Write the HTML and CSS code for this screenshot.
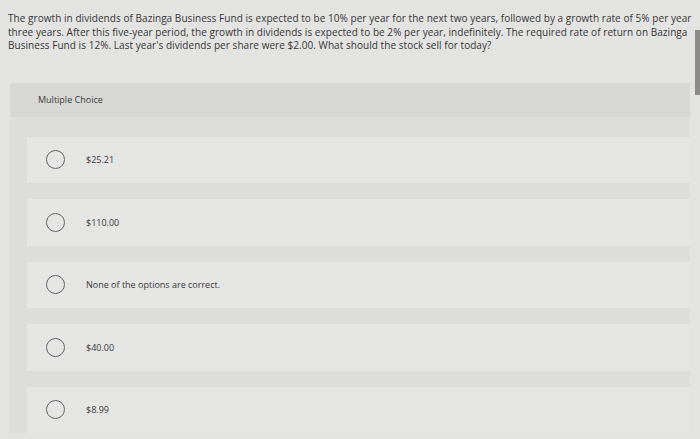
FILE: index.html
```html
<!DOCTYPE html>
<html lang="en">
<head>
  <meta charset="UTF-8">
  <title>Multiple Choice</title>
  <link rel="stylesheet" href="styles.css">
</head>
<body>
  <p class="question">The growth in dividends of Bazinga Business Fund is expected to be 10% per year for the next two years, followed by a growth rate of 5% per year three years. After this five-year period, the growth in dividends is expected to be 2% per year, indefinitely. The required rate of return on Bazinga Business Fund is 12%. Last year's dividends per share were $2.00. What should the stock sell for today?</p>

  <div class="scroll-thumb"></div>

  <div class="panel">
    <div class="panel-header">Multiple Choice</div>
    <div class="options">
      <label class="option"><span class="radio"></span><span class="option-text">$25.21</span></label>
      <label class="option"><span class="radio"></span><span class="option-text">$110.00</span></label>
      <label class="option"><span class="radio"></span><span class="option-text">None of the options are correct.</span></label>
      <label class="option"><span class="radio"></span><span class="option-text">$40.00</span></label>
      <label class="option"><span class="radio"></span><span class="option-text">$8.99</span></label>
    </div>
  </div>
</body>
</html>
```

FILE: styles.css
```css
body {
  margin: 0;
  font-family: "Open Sans", Lato, sans-serif;
  background-color: #e3e3e1;
  color: #333;
  height: 439px;
  overflow: hidden;
  position: relative;
}

.question {
  margin: 0;
  padding: 12px 0 0 8px;
  font-size: 10px;
  letter-spacing: 0.05px;
  line-height: 13.5px;
  width: 692px;
  color: #363636;
}

.scroll-thumb {
  position: absolute;
  right: 0;
  top: 30px;
  width: 5px;
  height: 65px;
  background-color: #8e8a85;
}

.panel {
  margin: 30px 10px 0 10px;
  background-color: #dddddb;
}

.panel-header {
  background-color: #d7d7d5;
  height: 34px;
  line-height: 34px;
  padding-left: 28px;
  font-size: 9px;
  color: #3a3a3a;
}

.options {
  display: flex;
  flex-direction: column;
  gap: 16px;
  padding: 20px 0 0 17px;
}

.option {
  display: flex;
  align-items: center;
  height: 46.5px;
  padding-left: 19px;
  background-color: #e5e5e3;
}

.radio {
  width: 17px;
  height: 17px;
  border: 1px solid #62626c;
  border-radius: 50%;
  flex-shrink: 0;
}

.option-text {
  margin-left: 21px;
  font-size: 9px;
  color: #3a3a3a;
}
```
